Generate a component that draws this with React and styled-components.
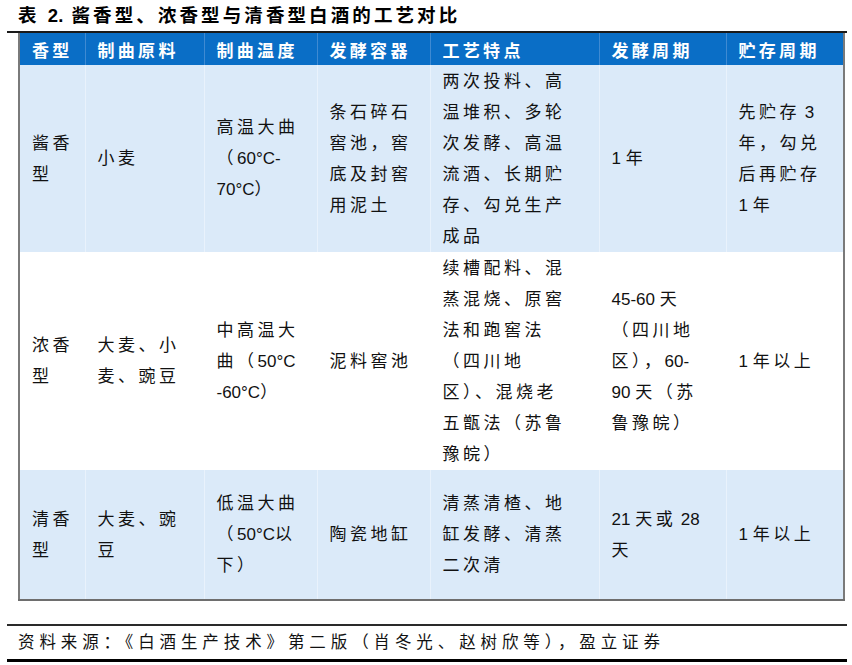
import React from "react";
import styled, { createGlobalStyle } from "styled-components";

const GlobalStyle = createGlobalStyle`
  html, body {
    margin: 0;
    padding: 0;
    background: #fff;
  }
  body {
    font-family: "Liberation Sans", "Noto Sans CJK SC", sans-serif;
    color: #111;
  }
`;

const Page = styled.div`
  width: 852px;
  height: 665px;
  padding: 0 5px 0 7px;
  box-sizing: border-box;
`;

const Title = styled.h1`
  margin: 0;
  height: 31px;
  line-height: 31px;
  padding-left: 11px;
  font-size: 18.5px;
  font-weight: bold;
  letter-spacing: 3.1px;
  color: #000;
  border-bottom: 2px solid #1a1a1a;
`;

const Table = styled.table`
  margin-left: 11px;
  width: 825px;
  table-layout: fixed;
  border-collapse: collapse;
  border-left: 2px solid #7a7a7a;
  border-right: 2px solid #7a7a7a;
  border-bottom: 2px solid #6e6e6e;
`;

const HeadCell = styled.th`
  height: 32px;
  padding: 0 0 0 12px;
  background: #0a6ec6;
  color: #fff;
  text-align: left;
  font-size: 17px;
  font-weight: bold;
  letter-spacing: 3.3px;
  border-left: 1px solid #3f8ad2;
  white-space: nowrap;
  &:first-child {
    border-left: none;
  }
`;

const Row = styled.tr`
  height: ${(p) => p.$h}px;
  background: ${(p) => (p.$shaded ? "#dbeaf9" : "#fff")};
`;

const Cell = styled.td`
  padding: 0 0 0 12px;
  vertical-align: middle;
  font-size: 17px;
  line-height: 31px;
  letter-spacing: 3.5px;
  white-space: nowrap;
  color: #111;
  border-left: 1px solid ${(p) => (p.$shaded ? "#e9f2fc" : "#fff")};
  &:first-child {
    border-left: none;
  }
`;

const Line = styled.div``;

const Num = styled.span`
  letter-spacing: 0;
`;

const Source = styled.div`
  margin-top: 23px;
  height: 33px;
  line-height: 33px;
  padding-left: 11px;
  font-size: 16.5px;
  letter-spacing: 4.9px;
  color: #111;
  border-top: 2px solid #2a2a2a;
  border-bottom: 3px solid #000;
`;

const widths = [66, 119, 113, 113, 169, 127, 118];

const headers = ["香型", "制曲原料", "制曲温度", "发酵容器", "工艺特点", "发酵周期", "贮存周期"];

const rows = [
  {
    h: 187,
    shaded: true,
    cells: [
      ["酱香", "型"],
      ["小麦"],
      ["高温大曲", "（60°C-", "70°C）"],
      ["条石碎石", "窖池，窖", "底及封窖", "用泥土"],
      ["两次投料、高", "温堆积、多轮", "次发酵、高温", "流酒、长期贮", "存、勾兑生产", "成品"],
      ["1 年"],
      ["先贮存 3", "年，勾兑", "后再贮存", "1 年"],
    ],
  },
  {
    h: 218,
    shaded: false,
    cells: [
      ["浓香", "型"],
      ["大麦、小", "麦、豌豆"],
      ["中高温大", "曲（50°C", "-60°C）"],
      ["泥料窖池"],
      ["续槽配料、混", "蒸混烧、原窖", "法和跑窖法", "（四川地", "区）、混烧老", "五甑法（苏鲁", "豫皖）"],
      ["45-60 天", "（四川地", "区），60-", "90 天（苏", "鲁豫皖）"],
      ["1 年以上"],
    ],
  },
  {
    h: 130,
    shaded: true,
    cells: [
      ["清香", "型"],
      ["大麦、豌", "豆"],
      ["低温大曲", "（50°C以", "下）"],
      ["陶瓷地缸"],
      ["清蒸清楂、地", "缸发酵、清蒸", "二次清"],
      ["21 天或 28", "天"],
      ["1 年以上"],
    ],
  },
];

// latin runs (digits, °C, dashes, spaces) keep normal spacing
const fmt = (text) =>
  text.split(/([0-9A-Za-z°.\- ]+)/).map((part, i) =>
    /^[0-9A-Za-z°.\- ]+$/.test(part) ? <Num key={i}>{part}</Num> : part
  );

export default function App() {
  return (
    <>
      <GlobalStyle />
      <Page>
        <Title>
          表 <Num>2.</Num> 酱香型、浓香型与清香型白酒的工艺对比
        </Title>
        <Table>
          <colgroup>
            {widths.map((w, i) => (
              <col key={i} style={{ width: w }} />
            ))}
          </colgroup>
          <thead>
            <tr>
              {headers.map((h) => (
                <HeadCell key={h}>{h}</HeadCell>
              ))}
            </tr>
          </thead>
          <tbody>
            {rows.map((row, r) => (
              <Row key={r} $h={row.h} $shaded={row.shaded}>
                {row.cells.map((lines, c) => (
                  <Cell key={c} $shaded={row.shaded}>
                    {lines.map((l, k) => (
                      <Line key={k}>{fmt(l)}</Line>
                    ))}
                  </Cell>
                ))}
              </Row>
            ))}
          </tbody>
        </Table>
        <Source>资料来源：《白酒生产技术》第二版（肖冬光、赵树欣等），盈立证券</Source>
      </Page>
    </>
  );
}
